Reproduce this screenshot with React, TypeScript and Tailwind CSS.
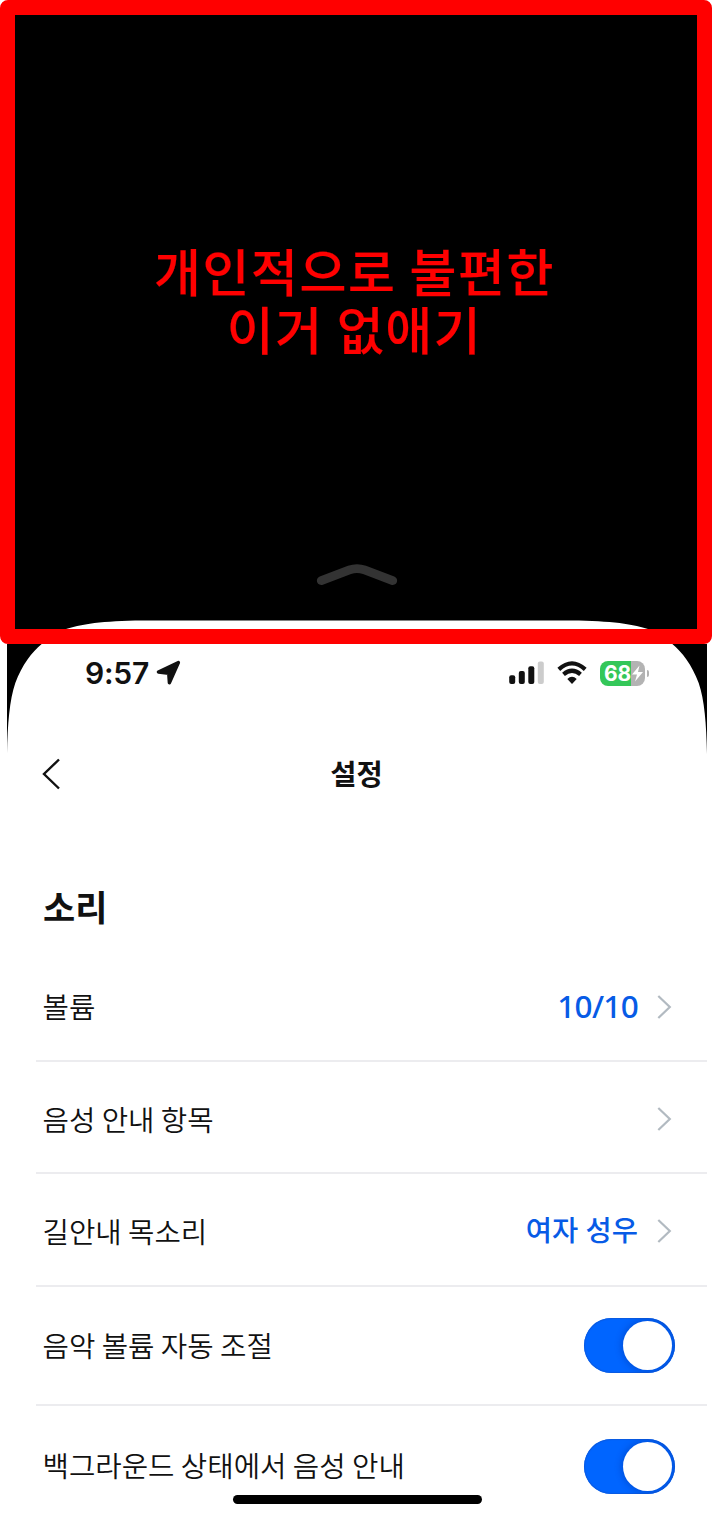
const settings = [
  { label: "볼륨", value: "10/10", kind: "link" },
  { label: "음성 안내 항목", value: "", kind: "link" },
  { label: "길안내 목소리", value: "여자 성우", kind: "link" },
  { label: "음악 볼륨 자동 조절", value: "", kind: "toggle" },
  { label: "백그라운드 상태에서 음성 안내", value: "", kind: "toggle" },
];

function Banner() {
  return (
    <section className="flex h-[644px] w-full flex-col items-center rounded-lg border-[15px] border-[#ff0000] bg-black">
      <h1 className="mt-[226px] mr-[3px] text-center text-[51px] leading-[58px] font-medium tracking-[1.6px] whitespace-nowrap text-[#ff0000] [-webkit-text-stroke:0.2px_#ff0000]">
        개인적으로 불편한
        <br />
        이거 없애기
      </h1>
      <svg className="mt-auto h-[65px] w-full shrink-0" viewBox="15 564 682 65">
        <path
          d="M321.3 580.6 L349.5 569.9 Q357 567.2 364.5 569.9 L392.7 580.6"
          fill="none"
          stroke="#333"
          strokeWidth="8.8"
          strokeLinecap="round"
        />
        <path
          d="M66 629 C85 623 108 620.4 150 620.4 H564 C606 620.4 629 623 648 629 Z"
          fill="#fff"
        />
      </svg>
    </section>
  );
}

function ScreenCorner({ className }: { className: string }) {
  return (
    <svg className={className} width="40" height="116" viewBox="0 0 40 116">
      <path d="M0 0 H34.7 C25 8 15 21 8.3 39 C2.5 56 0.6 80 0 110 Z" fill="#000" />
    </svg>
  );
}

function StatusBar() {
  return (
    <div className="flex h-[58px] items-center justify-between pr-[63px] pl-[85px]">
      <div className="flex items-center gap-[7px]">
        <span className="font-['Inter',sans-serif] text-[30px] leading-none font-semibold tracking-[-0.2px] text-[#111]">
          9:57
        </span>
        <svg width="26" height="26" viewBox="0 0 26 26">
          <path
            d="M2.4 12 L22.4 2.6 L13.4 22.8 L12.7 13.2 Z"
            fill="#111"
            stroke="#111"
            strokeWidth="3.4"
            strokeLinejoin="round"
          />
        </svg>
      </div>
      <div className="flex items-center">
        <svg width="36" height="24" viewBox="0 0 36 24">
          <rect x="0.2" y="14.3" width="6" height="8.7" rx="2" fill="#111" />
          <rect x="9.8" y="10" width="6" height="13" rx="2" fill="#111" />
          <rect x="19.3" y="5.2" width="6" height="17.8" rx="2" fill="#111" />
          <rect x="28.8" y="0.6" width="6" height="22.4" rx="2" fill="#ccc" />
        </svg>
        <svg className="ml-3" width="30" height="24" viewBox="0 0 30 24">
          <path
            d="M1.8 8.4 Q15 -3.6 28.2 8.4 M6.5 13.4 Q15 6.2 23.5 13.4"
            fill="none"
            stroke="#111"
            strokeWidth="4.2"
          />
          <path d="M10.3 18 Q15 13.6 19.7 18 L15 23 Z" fill="#111" />
        </svg>
        <div className="ml-[13px] flex items-center">
          <div className="flex h-[25px] w-[45px] items-center overflow-hidden rounded-lg bg-[linear-gradient(to_right,#34c759_31px,#b3b3b3_31px)] pl-[4px]">
            <span className="w-[27px] font-['Inter',sans-serif] text-[21px] leading-none font-bold tracking-[-0.2px] text-white">
              68
            </span>
            <svg width="13" height="17" viewBox="0 0 13 17">
              <path d="M8.5 0.5 L1 9.5 H6 L4 16.5 L12 7 H7 Z" fill="#fff" />
            </svg>
          </div>
          <div className="ml-[1.5px] h-[7px] w-[2.5px] rounded-r-full bg-[#b3b3b3]" />
        </div>
      </div>
    </div>
  );
}

function Toggle() {
  return (
    <div className="mr-[32px] flex h-[55px] w-[91px] items-center justify-end overflow-hidden rounded-full bg-[#0065ff] pr-[3px] shadow-[inset_0_0_1px_1px_#0a5ae0]">
      <div className="size-[49px] rounded-full bg-white shadow-[0_0_6px_2px_rgba(0,40,140,0.3)]" />
    </div>
  );
}

function Chevron() {
  return (
    <svg className="mr-[35px] ml-[19px]" width="15" height="24" viewBox="0 0 15 24">
      <path d="M1.3 1 L12.8 12 L1.3 23" fill="none" stroke="#b2bac1" strokeWidth="2.2" />
    </svg>
  );
}

export default function App() {
  return (
    <main className="relative h-[1518px] w-[712px] overflow-hidden bg-white font-['Noto_Sans_CJK_KR',sans-serif] text-[#111]">
      <Banner />
      <ScreenCorner className="absolute top-[644px] left-[7px]" />
      <ScreenCorner className="absolute top-[644px] right-[5px] -scale-x-100" />
      <StatusBar />
      <header className="mt-[32px] grid h-20 grid-cols-3 items-center">
        <svg className="ml-[42px]" width="20" height="32" viewBox="0 0 20 32">
          <path d="M17 1.5 L2 16 L17 30.5" fill="none" stroke="#111" strokeWidth="2.4" />
        </svg>
        <h2 className="pb-[2px] pl-px text-center text-[28.5px] leading-none font-bold">설정</h2>
      </header>
      <h3 className="mt-[66px] ml-[43px] h-[69.5px] text-[35px] leading-[52px] font-bold">소리</h3>
      <ul className="mr-[5px] ml-[36px] divide-y-2 divide-[#ececef]">
        {settings.map((item) => (
          <li
            key={item.label}
            className={
              item.kind === "link"
                ? "flex h-[112.4px] items-center pt-[4px] pl-[6.5px]"
                : "flex h-[119.3px] items-center pt-px pl-[6.5px]"
            }
          >
            <span
              className={
                item.kind === "link"
                  ? "flex-1 text-[28.7px] leading-none font-[350]"
                  : "flex-1 pb-px text-[28.7px] leading-none font-[350]"
              }
            >
              {item.label}
            </span>
            {item.kind === "link" ? (
              <>
                <span className="pb-[2px] font-['Noto_Sans','Noto_Sans_CJK_KR',sans-serif] text-[28.5px] leading-none font-medium text-[#075be6]">
                  {item.value === "10/10" ? (
                    <span className="text-[31.5px] tracking-[-0.7px]">{item.value}</span>
                  ) : (
                    item.value
                  )}
                </span>
                <Chevron />
              </>
            ) : (
              <Toggle />
            )}
          </li>
        ))}
      </ul>
      <div className="absolute bottom-[14px] left-[232.5px] h-[9px] w-[249.5px] rounded-full bg-black" />
    </main>
  );
}
